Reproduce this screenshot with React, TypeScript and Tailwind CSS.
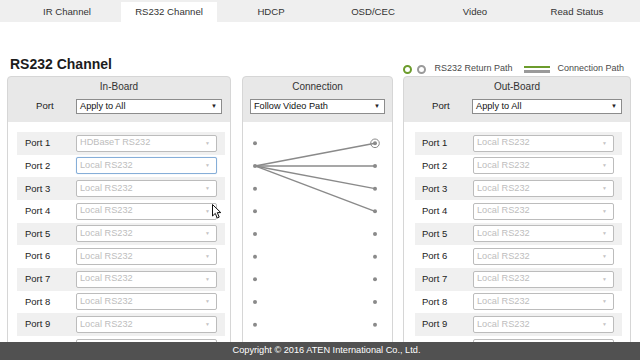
const TABS = ["IR Channel", "RS232 Channel", "HDCP", "OSD/CEC", "Video", "Read Status"];
const PORTS = [1, 2, 3, 4, 5, 6, 7, 8, 9, 10];
const ROW = 22.67;

export default function App() {
  return (
    <div className="relative h-[360px] w-[640px] overflow-hidden bg-white font-['Liberation_Sans',Arial,sans-serif] text-[#222]">
      <TabBar />
      <div className="mt-[34px] flex h-[20px] items-start pl-[10px] pr-[16px]">
        <h1 className="h-[16px] text-[14px] font-bold leading-[16px] text-[#1c1c1c]">RS232 Channel</h1>
        <Legend />
      </div>
      <div className="flex pl-[7px]">
        <BoardPanel title="In-Board" width="w-[224px]" bodyPad="pl-[9px] pr-[5px]" rowPad="pl-[8px] pr-[8px]" focusRow={2} first="HDBaseT RS232" />
        <ConnectionPanel />
        <BoardPanel title="Out-Board" width="w-[228px] ml-[10px]" bodyPad="pl-[11px] pr-[8px]" rowPad="pl-[7px] pr-[8px]" />
      </div>
      <Cursor />
      <footer className="absolute inset-x-0 bottom-0 flex h-[18px] items-center justify-center bg-[#515151] pl-[13px] text-[9.2px] text-white">
        Copyright © 2016 ATEN International Co., Ltd.
      </footer>
    </div>
  );
}

function TabBar() {
  return (
    <div className="flex h-[22px] bg-[#efefef] pl-[16px]">
      {TABS.map((t) => (
        <div key={t} className="w-[102px] px-[3px] pt-[2px]">
          <div
            className={
              t === "RS232 Channel"
                ? "flex h-full items-center justify-center bg-white text-[9.6px] text-[#333]"
                : "flex h-full items-center justify-center text-[9.6px] text-[#333]"
            }
          >
            {t}
          </div>
        </div>
      ))}
    </div>
  );
}

function Legend() {
  return (
    <div className="ml-auto mt-[7px] flex h-[12px] items-center text-[9px] text-[#4a4a4a]">
      <span className="h-[9px] w-[9px] rounded-full border-[2.5px] border-[#6c9c2c]" />
      <span className="ml-[5px] h-[9px] w-[9px] rounded-full border-[2.5px] border-[#9a9a9a]" />
      <span className="ml-[8px]">RS232 Return Path</span>
      <span className="ml-[12px] flex flex-col gap-[2px]">
        <span className="block h-[2.5px] w-[26px] bg-[#6c9c2c]" />
        <span className="block h-[2.5px] w-[26px] bg-[#9a9a9a]" />
      </span>
      <span className="ml-[7px]">Connection Path</span>
    </div>
  );
}

function HeaderSelect({ value }: { value: string }) {
  return (
    <div className="flex h-[15px] flex-1 items-center justify-between border border-[#8c8c8c] bg-white pl-[3px] pr-[4px] text-[9.2px] text-[#111]">
      <span>{value}</span>
      <span className="text-[6px] text-[#222]">▼</span>
    </div>
  );
}

function RowSelect({ value, focus }: { value: string; focus?: boolean }) {
  return (
    <div
      className={
        focus
          ? "flex h-[17px] flex-1 items-center justify-between rounded-[2px] border border-[#86aed8] bg-white pl-[3px] pr-[6px] text-[9.2px] text-[#bdbdbd] shadow-[0_0_1px_#a9c7e8]"
          : "flex h-[17px] flex-1 items-center justify-between rounded-[2px] border border-[#bcbcbc] bg-white pl-[3px] pr-[6px] text-[9.2px] text-[#bdbdbd]"
      }
    >
      <span>{value}</span>
      <span className="text-[5px] text-[#c4c4c4]">▼</span>
    </div>
  );
}

function BoardPanel({
  title,
  width,
  bodyPad,
  rowPad,
  focusRow,
  first,
}: {
  title: string;
  width: string;
  bodyPad: string;
  rowPad: string;
  focusRow?: number;
  first?: string;
}) {
  return (
    <div className={`${width} rounded-t-[4px] border border-[#d6d6d6] bg-[#e8e8e8]`}>
      <div className="h-[45px] pt-[4px]">
        <div className="h-[12px] text-center text-[10px] leading-[12px] text-[#333]">{title}</div>
        <div className="mt-[6px] flex items-center pl-[28px] pr-[8px]">
          <span className="w-[40px] text-[9.6px]">Port</span>
          <HeaderSelect value="Apply to All" />
        </div>
      </div>
      <div className={`bg-white pt-[10px] ${bodyPad}`}>
        {PORTS.map((p) => (
          <div
            key={p}
            className={`flex h-[22.67px] items-center ${rowPad} ${p % 2 === 1 ? "bg-[#f0f0f0]" : ""}`}
          >
            <span className="w-[51px] text-[9.5px] text-[#222]">Port {p}</span>
            <RowSelect value={p === 1 && first ? first : "Local RS232"} focus={p === focusRow} />
          </div>
        ))}
      </div>
    </div>
  );
}

function ConnectionPanel() {
  const top = 21.3;
  const y = (i: number) => top + i * ROW;
  return (
    <div className="ml-[11px] w-[151px] rounded-t-[4px] border border-[#d6d6d6] bg-[#e8e8e8]">
      <div className="h-[45px] pt-[4px]">
        <div className="h-[12px] text-center text-[10px] leading-[12px] text-[#333]">Connection</div>
        <div className="mt-[6px] flex px-[7px]">
          <HeaderSelect value="Follow Video Path" />
        </div>
      </div>
      <div className="bg-white">
        <svg width="149" height="240" viewBox="0 0 149 240">
          {[0, 1, 2, 3].map((i) => (
            <line key={i} x1="12" y1={y(1)} x2="132" y2={y(i)} stroke="#8a8a8a" strokeWidth="1.4" />
          ))}
          <circle cx="132" cy={y(0)} r="4.3" fill="none" stroke="#8a8a8a" strokeWidth="1" />
          {PORTS.map((_, i) => (
            <g key={i}>
              <circle cx="12" cy={y(i)} r="2" fill="#8a8a8a" />
              <circle cx="132" cy={y(i)} r="2" fill="#8a8a8a" />
            </g>
          ))}
        </svg>
      </div>
    </div>
  );
}

function Cursor() {
  return (
    <svg className="absolute left-[212px] top-[204px]" width="10" height="16" viewBox="0 0 10 16">
      <path d="M0.5 0.5 L0.5 12 L3.3 9.4 L5.2 14 L7.2 13.1 L5.3 8.6 L8.8 8.6 Z" fill="#fff" stroke="#111" strokeWidth="1" strokeLinejoin="round" />
    </svg>
  );
}
